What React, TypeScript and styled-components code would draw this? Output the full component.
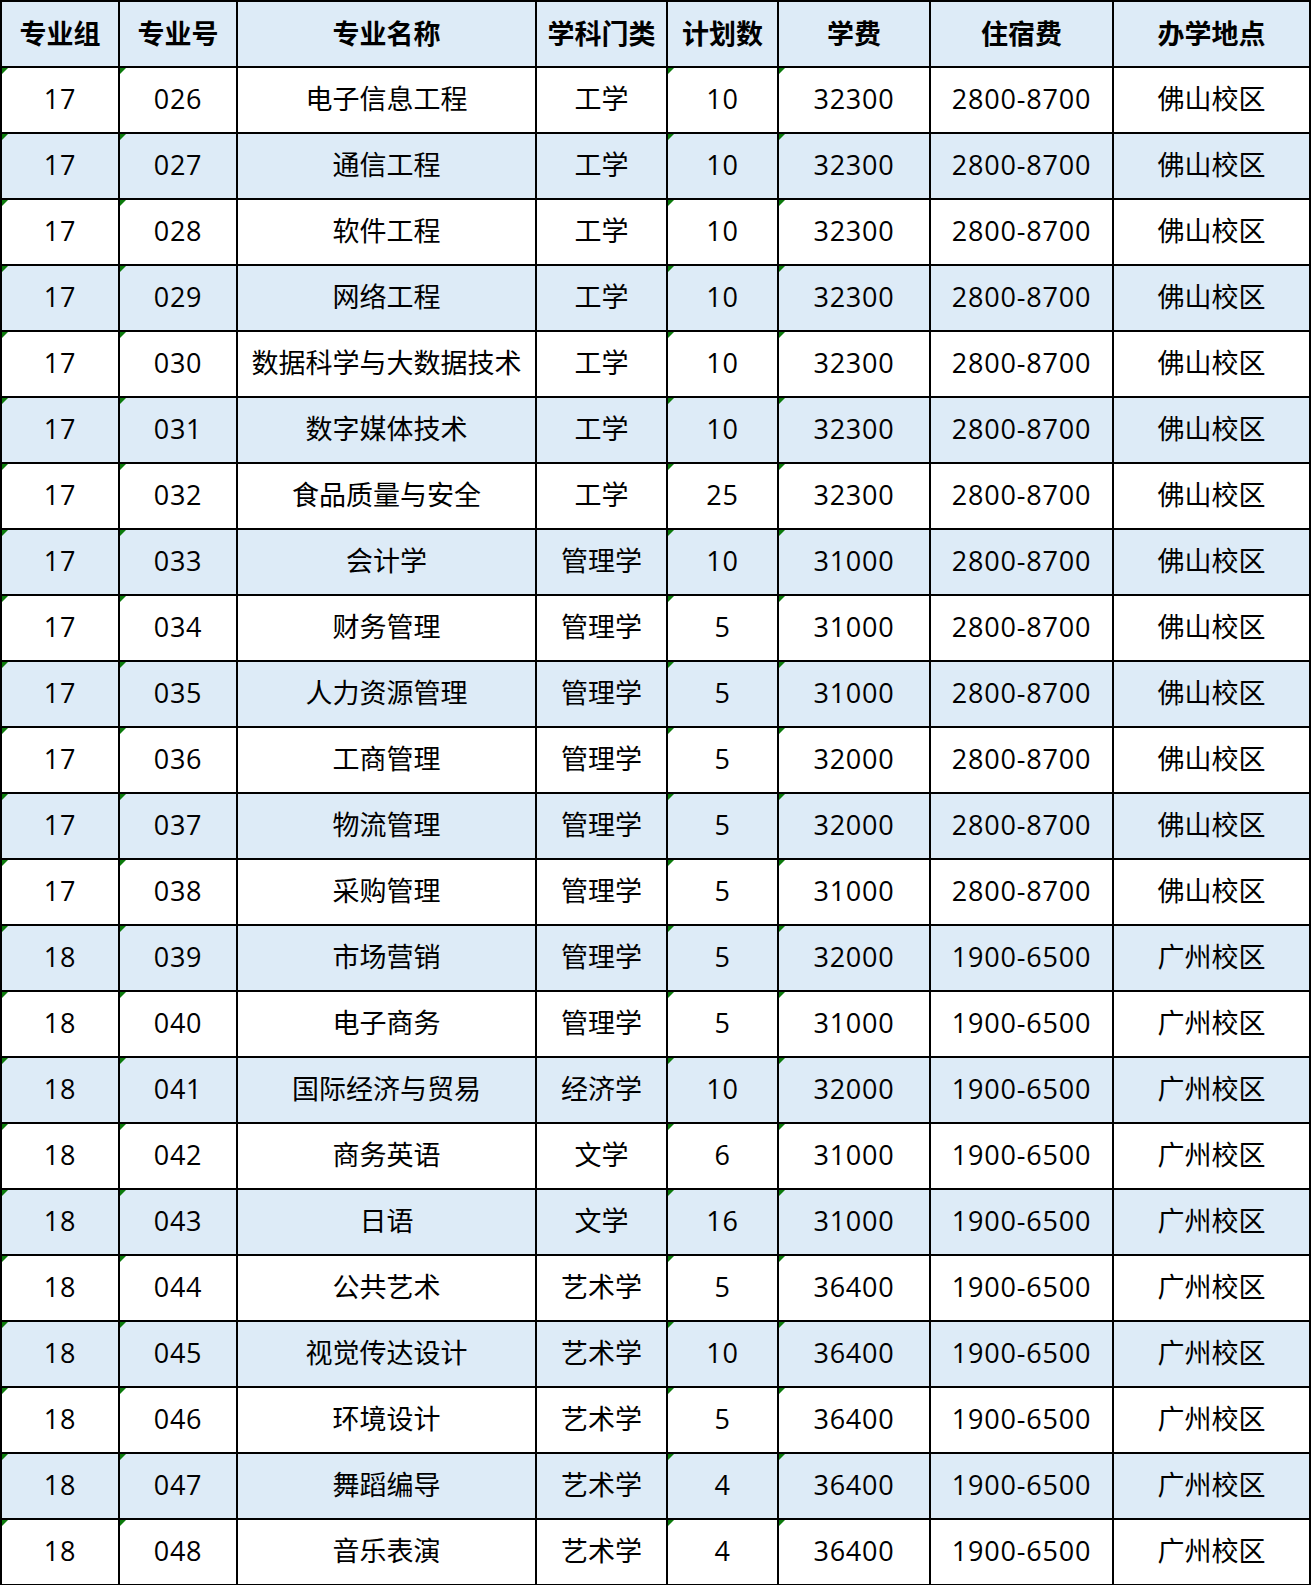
import React from 'react';
import styled, { createGlobalStyle } from 'styled-components';

interface Major {
  group: string;
  code: string;
  name: string;
  category: string;
  plan: number;
  tuition: number;
  lodging: string;
  campus: string;
}

const FS = '佛山校区';
const GZ = '广州校区';
const FS_FEE = '2800-8700';
const GZ_FEE = '1900-6500';

const majors: Major[] = [
  { group: '17', code: '026', name: '电子信息工程', category: '工学', plan: 10, tuition: 32300, lodging: FS_FEE, campus: FS },
  { group: '17', code: '027', name: '通信工程', category: '工学', plan: 10, tuition: 32300, lodging: FS_FEE, campus: FS },
  { group: '17', code: '028', name: '软件工程', category: '工学', plan: 10, tuition: 32300, lodging: FS_FEE, campus: FS },
  { group: '17', code: '029', name: '网络工程', category: '工学', plan: 10, tuition: 32300, lodging: FS_FEE, campus: FS },
  { group: '17', code: '030', name: '数据科学与大数据技术', category: '工学', plan: 10, tuition: 32300, lodging: FS_FEE, campus: FS },
  { group: '17', code: '031', name: '数字媒体技术', category: '工学', plan: 10, tuition: 32300, lodging: FS_FEE, campus: FS },
  { group: '17', code: '032', name: '食品质量与安全', category: '工学', plan: 25, tuition: 32300, lodging: FS_FEE, campus: FS },
  { group: '17', code: '033', name: '会计学', category: '管理学', plan: 10, tuition: 31000, lodging: FS_FEE, campus: FS },
  { group: '17', code: '034', name: '财务管理', category: '管理学', plan: 5, tuition: 31000, lodging: FS_FEE, campus: FS },
  { group: '17', code: '035', name: '人力资源管理', category: '管理学', plan: 5, tuition: 31000, lodging: FS_FEE, campus: FS },
  { group: '17', code: '036', name: '工商管理', category: '管理学', plan: 5, tuition: 32000, lodging: FS_FEE, campus: FS },
  { group: '17', code: '037', name: '物流管理', category: '管理学', plan: 5, tuition: 32000, lodging: FS_FEE, campus: FS },
  { group: '17', code: '038', name: '采购管理', category: '管理学', plan: 5, tuition: 31000, lodging: FS_FEE, campus: FS },
  { group: '18', code: '039', name: '市场营销', category: '管理学', plan: 5, tuition: 32000, lodging: GZ_FEE, campus: GZ },
  { group: '18', code: '040', name: '电子商务', category: '管理学', plan: 5, tuition: 31000, lodging: GZ_FEE, campus: GZ },
  { group: '18', code: '041', name: '国际经济与贸易', category: '经济学', plan: 10, tuition: 32000, lodging: GZ_FEE, campus: GZ },
  { group: '18', code: '042', name: '商务英语', category: '文学', plan: 6, tuition: 31000, lodging: GZ_FEE, campus: GZ },
  { group: '18', code: '043', name: '日语', category: '文学', plan: 16, tuition: 31000, lodging: GZ_FEE, campus: GZ },
  { group: '18', code: '044', name: '公共艺术', category: '艺术学', plan: 5, tuition: 36400, lodging: GZ_FEE, campus: GZ },
  { group: '18', code: '045', name: '视觉传达设计', category: '艺术学', plan: 10, tuition: 36400, lodging: GZ_FEE, campus: GZ },
  { group: '18', code: '046', name: '环境设计', category: '艺术学', plan: 5, tuition: 36400, lodging: GZ_FEE, campus: GZ },
  { group: '18', code: '047', name: '舞蹈编导', category: '艺术学', plan: 4, tuition: 36400, lodging: GZ_FEE, campus: GZ },
  { group: '18', code: '048', name: '音乐表演', category: '艺术学', plan: 4, tuition: 36400, lodging: GZ_FEE, campus: GZ },
];

const headers = ['专业组', '专业号', '专业名称', '学科门类', '计划数', '学费', '住宿费', '办学地点'];
const widths = [118, 118, 299, 131, 111, 152, 183, 197];

const GlobalStyle = createGlobalStyle`
  html, body {
    margin: 0;
    padding: 0;
    background: #ffffff;
  }
  body {
    font-family: "Open Sans", "Noto Sans CJK SC", sans-serif;
    color: #000;
  }
`;

const Table = styled.table`
  border-collapse: collapse;
  table-layout: fixed;
  width: 1310px;
`;

const HeadRow = styled.tr`
  height: 66px;
  background: #ddebf7;
`;

const Row = styled.tr<{ $shaded: boolean }>`
  height: 66px;
  background: ${(p) => (p.$shaded ? '#ddebf7' : '#ffffff')};
`;

const HeadCell = styled.th`
  border: 2px solid #000;
  padding: 0 0 3px;
  font-family: "Noto Sans CJK SC", sans-serif;
  font-size: 27px;
  font-weight: 700;
  text-align: center;
  vertical-align: middle;
  white-space: nowrap;
`;

// 数字存为文本的单元格左上角有绿色小三角
const Cell = styled.td<{ $flag?: boolean; $num?: boolean }>`
  position: relative;
  border: 2px solid #000;
  padding: 0 0 2px;
  font-size: 27px;
  font-weight: 400;
  line-height: 1.3;
  letter-spacing: ${(p) => (p.$num ? '0.8px' : '0')};
  text-align: center;
  vertical-align: middle;
  white-space: nowrap;

  &::before {
    content: '';
    display: ${(p) => (p.$flag ? 'block' : 'none')};
    position: absolute;
    top: 0;
    left: 0;
    width: 0;
    height: 0;
    border-top: 6px solid #0b7a0b;
    border-right: 6px solid transparent;
  }
`;

const App: React.FC = () => {
  return (
    <>
      <GlobalStyle />
      <Table>
        <colgroup>
          {widths.map((w, i) => (
            <col key={i} style={{ width: w }} />
          ))}
        </colgroup>
        <thead>
          <HeadRow>
            {headers.map((h) => (
              <HeadCell key={h}>{h}</HeadCell>
            ))}
          </HeadRow>
        </thead>
        <tbody>
          {majors.map((m, i) => (
            <Row key={m.code} $shaded={i % 2 === 1}>
              <Cell $flag $num>{m.group}</Cell>
              <Cell $flag $num>{m.code}</Cell>
              <Cell>{m.name}</Cell>
              <Cell>{m.category}</Cell>
              <Cell $flag $num>{m.plan}</Cell>
              <Cell $flag $num>{m.tuition}</Cell>
              <Cell $num>{m.lodging}</Cell>
              <Cell>{m.campus}</Cell>
            </Row>
          ))}
        </tbody>
      </Table>
    </>
  );
};

export default App;
